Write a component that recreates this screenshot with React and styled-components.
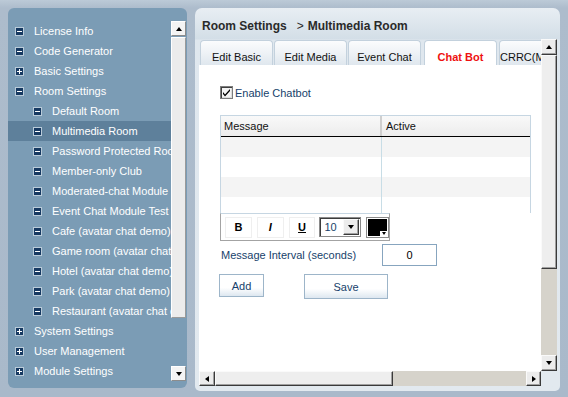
import React from 'react';
import styled, { createGlobalStyle, css } from 'styled-components';

const GlobalStyle = createGlobalStyle`
  html, body { margin: 0; padding: 0; }
  body {
    background: #a9b9ca;
    font-family: "Liberation Sans", Arial, sans-serif;
  }
`;

const menu = [
  { label: 'License Info', level: 0, open: true },
  { label: 'Code Generator', level: 0, open: true },
  { label: 'Basic Settings', level: 0 },
  { label: 'Room Settings', level: 0, open: true },
  { label: 'Default Room', level: 1, open: true },
  { label: 'Multimedia Room', level: 1, open: true, active: true },
  { label: 'Password Protected Room', level: 1, open: true },
  { label: 'Member-only Club', level: 1, open: true },
  { label: 'Moderated-chat Module', level: 1, open: true },
  { label: 'Event Chat Module Test', level: 1, open: true },
  { label: 'Cafe (avatar chat demo)', level: 1, open: true },
  { label: 'Game room (avatar chat demo)', level: 1, open: true },
  { label: 'Hotel (avatar chat demo)', level: 1, open: true },
  { label: 'Park (avatar chat demo)', level: 1, open: true },
  { label: 'Restaurant (avatar chat demo)', level: 1, open: true },
  { label: 'System Settings', level: 0 },
  { label: 'User Management', level: 0 },
  { label: 'Module Settings', level: 0 },
];

const tabs = ['Edit Basic', 'Edit Media', 'Event Chat', 'Chat Bot', 'CRRC(Module)'];

const App = () => (
  <>
    <GlobalStyle />
    <Page>
      <SidePanel>
        <Tree>
          {menu.map((item) => (
            <TreeRow key={item.label} $level={item.level} $active={item.active}>
              <ToggleIcon open={item.open} />
              {item.label}
            </TreeRow>
          ))}
        </Tree>
        <SideScroll>
          <ScrollBtn $light><Arrow $dir="up" /></ScrollBtn>
          <SideThumb />
          <Spacer />
          <ScrollBtn $light><Arrow $dir="down" /></ScrollBtn>
        </SideScroll>
      </SidePanel>

      <MainPanel>
        <Header>
          <b>Room Settings</b>
          <Crumb>&gt;</Crumb>
          <b>Multimedia Room</b>
        </Header>
        <ScrollBox>
          <Viewport>
            <TabBar>
              {tabs.map((t) => (
                <Tab key={t} $active={t === 'Chat Bot'}>{t}</Tab>
              ))}
            </TabBar>
            <Content>
              <CheckRow>
                <CheckBox>
                  <svg width="11" height="11" viewBox="0 0 11 11">
                    <path d="M2 5 L4 7.5 L9 2 L9 4 L4 9.5 L2 7 Z" fill="#000" />
                  </svg>
                </CheckBox>
                Enable Chatbot
              </CheckRow>

              <Table>
                <HeadRow>
                  <HeadCell>Message</HeadCell>
                  <HeadCell $divider>Active</HeadCell>
                </HeadRow>
                {[0, 1, 2, 3].map((i) => (
                  <BodyRow key={i} $alt={i % 2 === 0}>
                    <BodyCell $first />
                    <BodyCell />
                  </BodyRow>
                ))}
              </Table>

              <Toolbar>
                <FmtButton>B</FmtButton>
                <FmtButton $italic>I</FmtButton>
                <FmtButton $underline>U</FmtButton>
                <SizeSelect>
                  <SizeValue>10</SizeValue>
                  <DropBtn><Arrow $dir="down" /></DropBtn>
                </SizeSelect>
                <ColorPick>
                  <Swatch />
                  <ColorNotch><Arrow $dir="down" $small /></ColorNotch>
                </ColorPick>
              </Toolbar>

              <IntervalRow>
                <FieldLabel>Message Interval (seconds)</FieldLabel>
                <NumberBox>0</NumberBox>
              </IntervalRow>

              <ButtonRow>
                <ActionButton $w={45} $h={23} $shift>Add</ActionButton>
                <ActionButton $w={84} $h={25}>Save</ActionButton>
              </ButtonRow>
            </Content>
          </Viewport>

          <VBar>
            <ScrollBtn $h={16}><Arrow $dir="up" /></ScrollBtn>
            <Thumb style={{ height: 214 }} />
            <Track />
            <ScrollBtn $h={16}><Arrow $dir="down" /></ScrollBtn>
          </VBar>
          <HBar>
            <ScrollBtn $w={16}><Arrow $dir="left" /></ScrollBtn>
            <Thumb style={{ width: 178 }} />
            <Track />
            <ScrollBtn $w={15}><Arrow $dir="right" /></ScrollBtn>
          </HBar>
          <Corner />
        </ScrollBox>
      </MainPanel>
    </Page>
  </>
);

export default App;

const ToggleIcon = ({ open }) => (
  <IconSvg width="9" height="9" viewBox="0 0 9 9" shapeRendering="crispEdges">
    <rect x="0" y="0" width="9" height="9" fill="#b9cbd9" />
    <rect x="1" y="1" width="7" height="7" fill="#173a62" />
    <rect x="2" y="4" width="5" height="1" fill="#fff" />
    {!open && <rect x="4" y="2" width="1" height="5" fill="#fff" />}
  </IconSvg>
);

const Page = styled.div`
  width: 568px;
  height: 397px;
  box-sizing: border-box;
  padding: 8px 8px 0 8px;
  display: flex;
  align-items: flex-start;
  gap: 8px;
  overflow: hidden;
  background: linear-gradient(180deg, #bccad7 0, #adbccc 8px, #a9b9ca 100%);
`;

const SidePanel = styled.div`
  width: 179px;
  height: 380px;
  flex-shrink: 0;
  border-radius: 6px;
  background: #7b9cb5;
  display: grid;
  grid-template-columns: 163px 16px;
  overflow: hidden;
`;

const Tree = styled.div`
  padding-top: 13px;
  overflow: hidden;
`;

const TreeRow = styled.div`
  height: 20px;
  display: flex;
  align-items: center;
  padding-left: ${(p) => (p.$level ? 25 : 7)}px;
  background: ${(p) => (p.$active ? '#5e809b' : 'transparent')};
  color: #fff;
  font-size: 11px;
  white-space: nowrap;
`;

const IconSvg = styled.svg`
  flex-shrink: 0;
  margin-right: 10px;
`;

const SideScroll = styled.div`
  margin-top: 13px;
  height: 360px;
  width: 15px;
  display: flex;
  flex-direction: column;
`;

const bevel = css`
  box-sizing: border-box;
  background: #ececec;
  border: 1px solid;
  border-color: #fafafa #3a3a3a #3a3a3a #fafafa;
  box-shadow: inset -1px -1px 0 #a0a0a0;
`;

const ScrollBtn = styled.div`
  ${bevel}
  flex-shrink: 0;
  width: ${(p) => (p.$w ? `${p.$w}px` : '100%')};
  height: ${(p) => (p.$h ? `${p.$h}px` : p.$w ? '100%' : '15px')};
  display: flex;
  align-items: center;
  justify-content: center;
  ${(p) =>
    p.$light &&
    css`
      background: #f4f4f4;
      border-color: #fff #8c8c8c #8c8c8c #fff;
      box-shadow: none;
    `}
`;

const arrowShapes = {
  up: css`border-left: 3px solid transparent; border-right: 3px solid transparent; border-bottom: 4px solid #000;`,
  down: css`border-left: 3px solid transparent; border-right: 3px solid transparent; border-top: 4px solid #000;`,
  left: css`border-top: 3px solid transparent; border-bottom: 3px solid transparent; border-right: 4px solid #000;`,
  right: css`border-top: 3px solid transparent; border-bottom: 3px solid transparent; border-left: 4px solid #000;`,
};

const Arrow = styled.span`
  width: 0;
  height: 0;
  ${(p) => arrowShapes[p.$dir]}
  ${(p) =>
    p.$small &&
    css`
      border-left-width: 2px;
      border-right-width: 2px;
      border-top-width: 3px;
    `}
`;

const SideThumb = styled.div`
  margin-top: 1px;
  height: 281px;
  box-sizing: border-box;
  background: #ececec;
  border: 1px solid #9a9a9a;
  border-left-color: #fff;
  border-top-color: #fff;
`;

const Spacer = styled.div`
  flex: 1;
`;

const MainPanel = styled.div`
  width: 365px;
  height: 383px;
  flex-shrink: 0;
  border-radius: 7px 7px 5px 5px;
  background: linear-gradient(180deg, #e8eef3 0, #d3dee7 31px, #dfe7ee 32px, #e2e9ef 100%);
  display: flex;
  flex-direction: column;
  overflow: hidden;
`;

const Header = styled.div`
  height: 31px;
  box-sizing: border-box;
  padding: 11px 0 0 7px;
  font-size: 12px;
  color: #2a2a2a;
  white-space: nowrap;
`;

const Crumb = styled.span`
  margin: 0 4px 0 10px;
`;

const ScrollBox = styled.div`
  margin-left: 4px;
  display: grid;
  grid-template-columns: 342px 16px;
  grid-template-rows: 332px 15px;
`;

const Viewport = styled.div`
  overflow: hidden;
  display: flex;
  flex-direction: column;
`;

const TabBar = styled.div`
  height: 26px;
  flex-shrink: 0;
  box-sizing: border-box;
  padding: 1px 0 0 1px;
  display: flex;
  gap: 1px;
`;

const Tab = styled.div`
  width: 73px;
  height: 25px;
  flex-shrink: 0;
  box-sizing: border-box;
  border: 1px solid #c3d1dd;
  border-bottom: none;
  border-radius: 4px 4px 0 0;
  background: linear-gradient(180deg, #fbfcfd 0, #eef2f6 50%, #dfe7ee 100%);
  padding-top: 10px;
  text-align: center;
  font-size: 11px;
  color: #111;
  white-space: nowrap;
  overflow: hidden;
  ${(p) =>
    p.$active &&
    css`
      margin: 0 1px 0 2px;
      background: #fff;
      color: #ee1111;
      font-weight: bold;
    `}
`;

const Content = styled.div`
  flex: 1;
  background: #fff;
  padding: 21px 0 0 21px;
`;

const CheckRow = styled.div`
  display: flex;
  align-items: center;
  gap: 2px;
  height: 13px;
  color: #173f6b;
  font-size: 11px;
`;

const CheckBox = styled.div`
  width: 13px;
  height: 13px;
  box-sizing: border-box;
  border: 1px solid #7d7d7d;
  box-shadow: inset 1px 1px 0 #404040, inset -1px -1px 0 #dcdcdc;
  background: #f4f4f4;
  display: flex;
  align-items: center;
  justify-content: center;
`;

const Table = styled.div`
  margin-top: 16px;
  width: 311px;
  height: 98px;
  box-sizing: border-box;
  border: 1px solid #c6d6e2;
  border-bottom: none;
  overflow: hidden;
`;

const HeadRow = styled.div`
  display: grid;
  grid-template-columns: 161px 1fr;
  height: 21px;
  box-sizing: border-box;
  border-bottom: 1px solid #000;
  background: linear-gradient(180deg, #f9f9f9, #ececec);
`;

const HeadCell = styled.div`
  padding-left: ${(p) => (p.$divider ? 4 : 3)}px;
  line-height: 20px;
  font-size: 11px;
  color: #111;
  ${(p) => p.$divider && css`border-left: 2px solid #cfcfcf; margin-left: -2px;`}
`;

const BodyRow = styled.div`
  display: grid;
  grid-template-columns: 161px 1fr;
  height: 20px;
  background: ${(p) => (p.$alt ? '#f4f4f4' : '#fff')};
`;

const BodyCell = styled.div`
  ${(p) => p.$first && css`border-right: 1px solid #c8dde6;`}
`;

const Toolbar = styled.div`
  width: 170px;
  height: 28px;
  box-sizing: border-box;
  border: 1px solid #a3a3a3;
  border-top: 1px solid #c6d6e2;
  display: flex;
  align-items: center;
  padding-left: 4px;
  gap: 5px;
`;

const FmtButton = styled.div`
  width: 27px;
  height: 21px;
  box-sizing: border-box;
  border: 1px solid #efefef;
  background: #fff;
  display: flex;
  align-items: center;
  justify-content: center;
  font-size: 11px;
  font-weight: bold;
  color: #000;
  font-style: ${(p) => (p.$italic ? 'italic' : 'normal')};
  text-decoration: ${(p) => (p.$underline ? 'underline' : 'none')};
`;

const SizeSelect = styled.div`
  width: 42px;
  height: 20px;
  margin-left: -1px;
  box-sizing: border-box;
  border: 1px solid #8a8a8a;
  box-shadow: inset 1px 1px 0 #3c3c3c;
  display: flex;
  align-items: center;
  background: #fff;
`;

const SizeValue = styled.span`
  flex: 1;
  padding-left: 4px;
  font-size: 11px;
  color: #173f6b;
`;

const DropBtn = styled.div`
  ${bevel}
  width: 16px;
  height: 16px;
  margin-right: 1px;
  display: flex;
  align-items: center;
  justify-content: center;
`;

const ColorPick = styled.div`
  position: relative;
  width: 23px;
  height: 21px;
  box-sizing: border-box;
  border: 1px solid #8a8a8a;
  padding: 1px;
  background: #fff;
`;

const Swatch = styled.div`
  width: 100%;
  height: 100%;
  background: #000;
`;

const ColorNotch = styled.div`
  position: absolute;
  right: 1px;
  bottom: 1px;
  width: 7px;
  height: 5px;
  background: #fff;
  display: flex;
  align-items: center;
  justify-content: center;
`;

const IntervalRow = styled.div`
  margin-top: 3px;
  display: flex;
  align-items: center;
  height: 22px;
`;

const FieldLabel = styled.span`
  width: 162px;
  padding-left: 1px;
  box-sizing: border-box;
  font-size: 11px;
  color: #173f6b;
`;

const NumberBox = styled.div`
  width: 55px;
  height: 22px;
  box-sizing: border-box;
  border: 1px solid #87a5bf;
  text-align: center;
  line-height: 20px;
  font-size: 11px;
  color: #000;
`;

const ButtonRow = styled.div`
  margin-top: 8px;
  display: flex;
  align-items: flex-start;
  gap: 40px;
`;

const ActionButton = styled.div`
  width: ${(p) => p.$w}px;
  height: ${(p) => p.$h}px;
  margin-left: ${(p) => (p.$shift ? -1 : 0)}px;
  box-sizing: border-box;
  border: 1px solid #9db5c9;
  background: linear-gradient(180deg, #fff 0, #fff 60%, #dde7f0 100%);
  display: flex;
  align-items: center;
  justify-content: center;
  font-size: 11px;
  color: #173f6b;
`;

const VBar = styled.div`
  display: flex;
  flex-direction: column;
`;

const HBar = styled.div`
  display: flex;
`;

const Thumb = styled.div`
  ${bevel}
  flex-shrink: 0;
  background: #eeeeee;
`;

const Track = styled.div`
  flex: 1;
  background: #d6d3cb;
`;

const Corner = styled.div`
  background: #e2e9ef;
`;
